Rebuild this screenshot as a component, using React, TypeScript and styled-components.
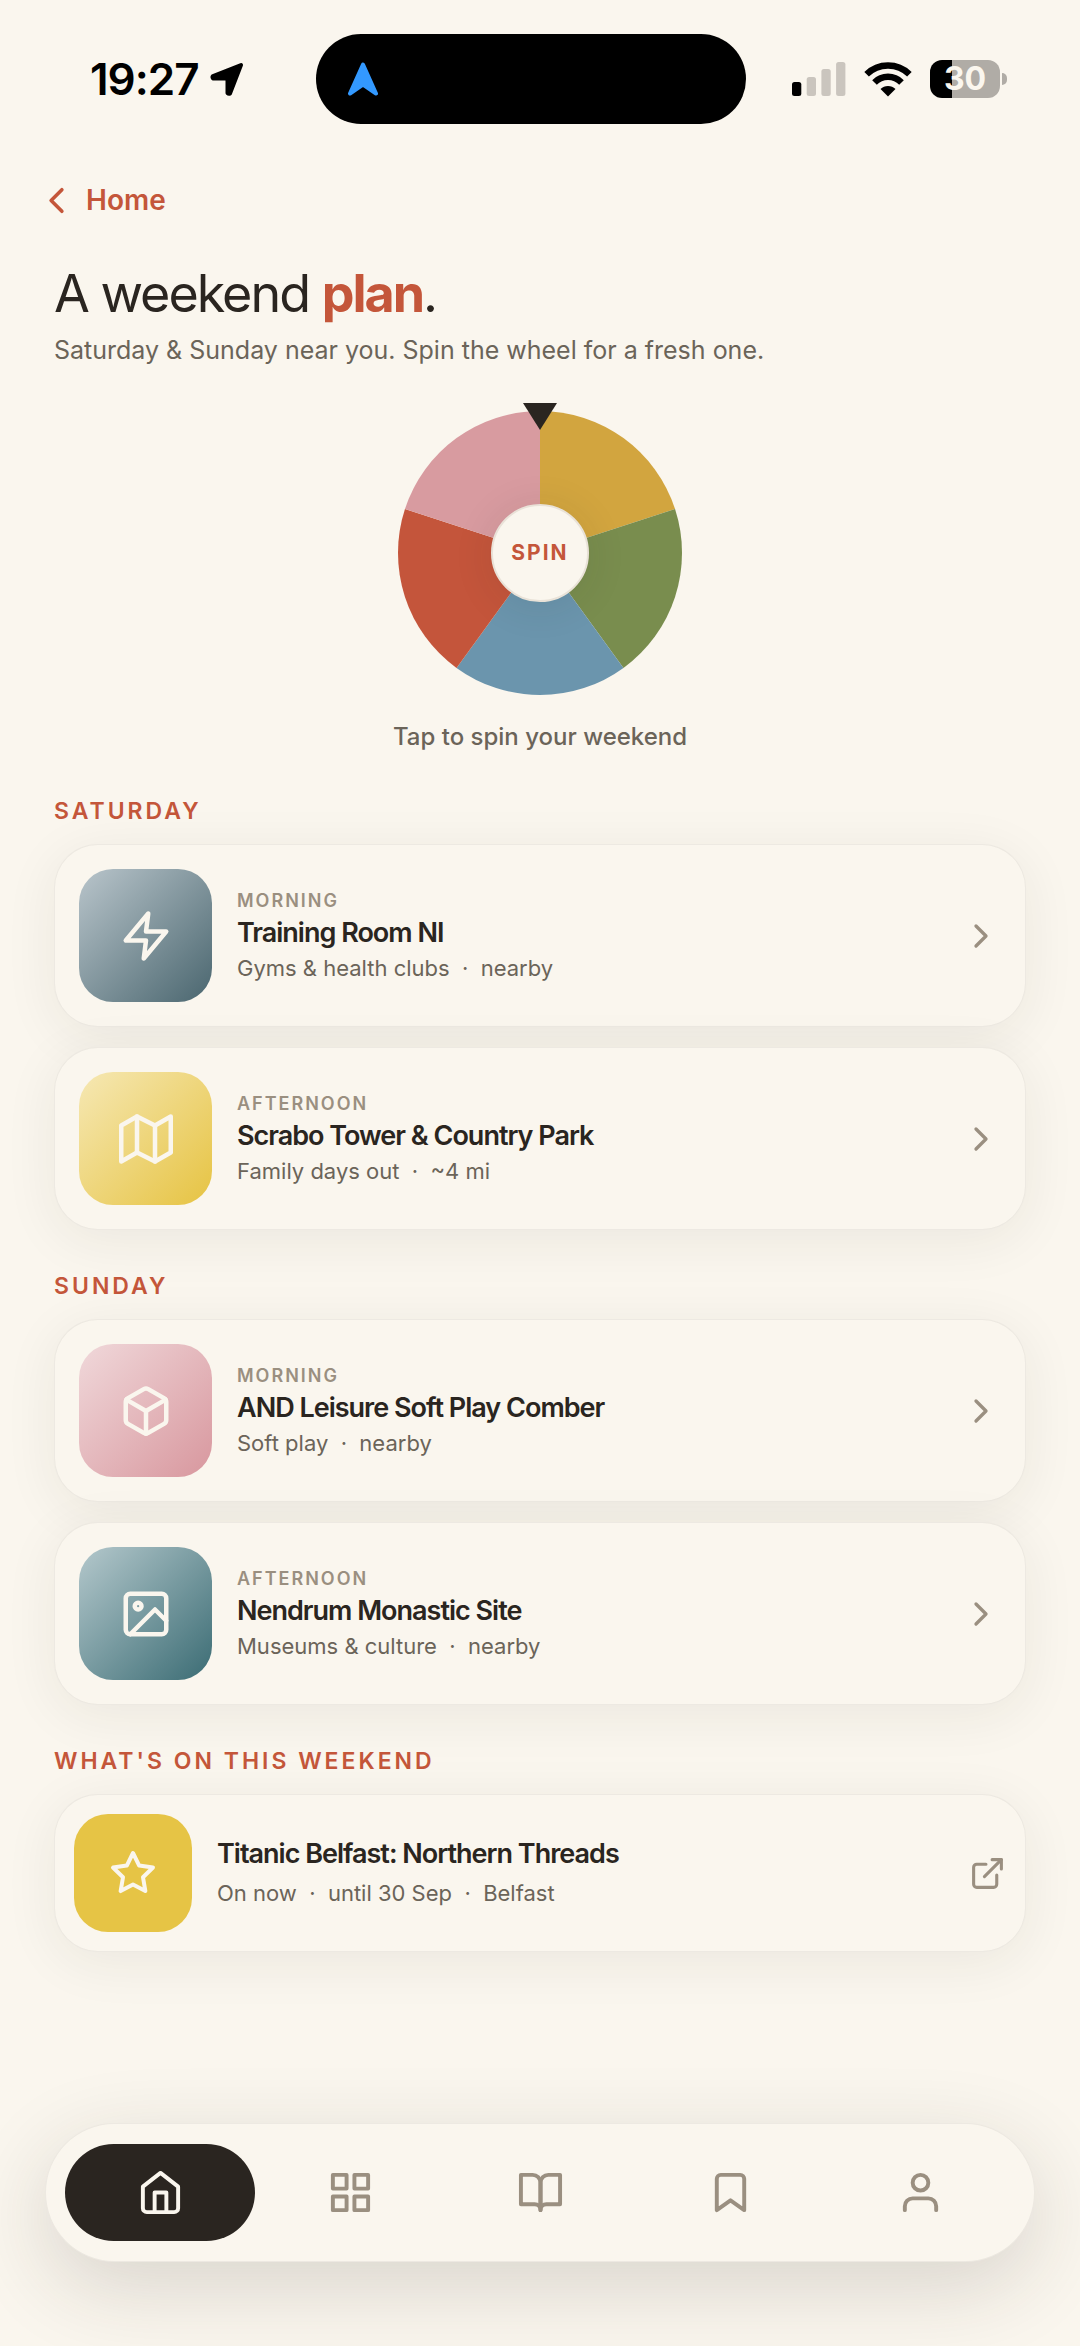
import React from "react";
import styled, { createGlobalStyle } from "styled-components";
import {
  FiBookOpen,
  FiBookmark,
  FiBox,
  FiChevronLeft,
  FiChevronRight,
  FiExternalLink,
  FiGrid,
  FiHome,
  FiImage,
  FiMap,
  FiStar,
  FiUser,
  FiZap,
} from "react-icons/fi";
import type { IconType } from "react-icons";

const color = {
  paper: "#faf6ee",
  ink: "#2a2520",
  body: "#6b6459",
  muted: "#9a8f80",
  brand: "#c4563a",
  line: "rgba(42, 37, 32, 0.06)",
};

const GlobalStyle = createGlobalStyle`
  *, *::before, *::after { box-sizing: border-box; }
  body {
    margin: 0;
    background: ${color.paper};
    color: ${color.ink};
    font-family: Inter, "Liberation Sans", sans-serif;
  }
  a { color: inherit; text-decoration: none; }
  h1, h2, h3, p { margin: 0; }
  svg { display: block; flex: none; }
`;

const Page = styled.div`
  display: flex;
  flex-direction: column;
  min-height: 100vh;
  overflow: hidden;
`;

/* Status bar */

const StatusBar = styled.header`
  display: grid;
  grid-template-columns: 316fr 430px 334fr;
  align-items: center;
  height: 124px;
  padding-top: 34px;
  color: #000;
`;

const StatusLeft = styled.div`
  display: flex;
  align-items: center;
  gap: 11px;
  padding-left: 90px;
`;

const Clock = styled.time`
  font-size: 44px;
  line-height: 48px;
  font-weight: 600;
  letter-spacing: -1px;
`;

const Island = styled.div`
  display: flex;
  align-items: center;
  height: 90px;
  padding: 0 31px;
  border-radius: 45px;
  background: #000;
`;

const StatusRight = styled.div`
  display: flex;
  align-items: center;
  justify-content: flex-end;
  gap: 18px;
  padding-right: 73px;
`;

const BatteryRow = styled.div`
  display: flex;
  align-items: center;
  gap: 2px;
`;

const BatteryBody = styled.div<{ $level: number }>`
  display: grid;
  place-items: center;
  width: 70px;
  height: 38px;
  border-radius: 12px;
  background: linear-gradient(to right, #000 ${(p) => p.$level}%, #b0aca6 ${(p) => p.$level}%);
  color: ${color.paper};
  font-size: 32px;
  line-height: 38px;
  font-weight: 700;
`;

const BatteryCap = styled.div`
  width: 5px;
  height: 12px;
  border-radius: 0 5px 5px 0;
  background: #b0aca6;
`;

/* Header */

const Main = styled.main`
  display: flex;
  flex-direction: column;
  padding: 0 54px;
`;

const BackNav = styled.nav`
  display: flex;
  margin-top: 54px;
  padding-left: 35px;
`;

const BackLink = styled.a`
  display: flex;
  align-items: center;
  gap: 8px;
  color: ${color.brand};
  font-size: 28px;
  line-height: 44px;
  font-weight: 600;
`;

const Title = styled.h1`
  margin-top: 42px;
  font-size: 52px;
  line-height: 60px;
  font-weight: 400;
  letter-spacing: -2px;

  strong {
    color: ${color.brand};
    font-weight: 700;
  }
`;

const Subtitle = styled.p`
  margin-top: 8px;
  color: ${color.body};
  font-size: 25px;
  line-height: 36px;
`;

/* Wheel */

const Spinner = styled.section`
  display: flex;
  flex-direction: column;
  align-items: center;
  margin-top: 43px;
`;

const WheelFrame = styled.div`
  position: relative;
  display: grid;
  place-items: center;

  > * { grid-area: 1 / 1; }
`;

const Pointer = styled.div`
  position: absolute;
  top: -8px;
  left: 50%;
  margin-left: -17px;
  border: solid transparent;
  border-width: 27px 17px 0;
  border-top-color: ${color.ink};
`;

const Hub = styled.button`
  width: 98px;
  height: 98px;
  padding: 0;
  border: 2px solid #e9e2d8;
  border-radius: 50%;
  background: ${color.paper};
  box-shadow: 0 4px 40px rgba(42, 37, 32, 0.1);
  color: ${color.brand};
  font: 700 21px/24px Inter, "Liberation Sans", sans-serif;
  letter-spacing: 2px;
`;

const SpinHint = styled.p`
  margin-top: 24px;
  color: ${color.body};
  font-size: 24px;
  line-height: 36px;
  font-weight: 500;
`;

/* Plan lists */

const Section = styled.section`
  display: flex;
  flex-direction: column;
  margin-top: 40px;
`;

const SectionTitle = styled.h2`
  color: ${color.brand};
  font-size: 23px;
  line-height: 32px;
  font-weight: 600;
  letter-spacing: 3px;
  text-transform: uppercase;
`;

const CardList = styled.div`
  display: flex;
  flex-direction: column;
  gap: 20px;
  margin-top: 17px;
`;

const Card = styled.a<{ $compact?: boolean }>`
  display: flex;
  align-items: center;
  gap: 25px;
  padding: ${(p) => (p.$compact ? "19px" : "24px")};
  border: 1px solid ${color.line};
  border-radius: 44px;
  background: ${color.paper};
  box-shadow: 0 10px 54px rgba(42, 37, 32, 0.07);
`;

const Tile = styled.div<{ $fill: string; $size: number }>`
  display: grid;
  place-items: center;
  flex: none;
  width: ${(p) => p.$size}px;
  height: ${(p) => p.$size}px;
  border-radius: 34px;
  background: ${(p) => p.$fill};
  color: ${color.paper};
`;

const CardText = styled.div`
  flex: 1;
  min-width: 0;
`;

const Slot = styled.p`
  color: ${color.muted};
  font-size: 18px;
  line-height: 28px;
  font-weight: 600;
  letter-spacing: 2px;
  text-transform: uppercase;
`;

const CardTitle = styled.h3`
  font-size: 27px;
  line-height: 36px;
  font-weight: 600;
  letter-spacing: -1px;
`;

const CardMeta = styled.p<{ $spaced?: boolean }>`
  margin-top: ${(p) => (p.$spaced ? "4px" : "0")};
  color: ${color.body};
  font-size: 22px;
  line-height: 34px;
`;

const Trailing = styled.span`
  color: ${color.muted};
`;

/* Tab bar */

const TabBar = styled.nav`
  display: grid;
  grid-template-columns: repeat(5, 1fr);
  margin: auto 45px 84px;
  padding: 20px 19px;
  border: 1px solid ${color.line};
  border-radius: 70px;
  background: ${color.paper};
  box-shadow: 0 24px 84px rgba(42, 37, 32, 0.16);
`;

const Tab = styled.a<{ $active: boolean }>`
  display: grid;
  place-items: center;
  height: 97px;
  border-radius: 49px;
  background: ${(p) => (p.$active ? color.ink : "transparent")};
  color: ${(p) => (p.$active ? color.paper : color.muted)};
`;

const sliceColors = ["#d2a53f", "#798d4e", "#6b95ad", "#c4553b", "#d89ba0"];

function Wheel() {
  const r = 142;
  const step = (2 * Math.PI) / sliceColors.length;
  const point = (i: number) => `${r + r * Math.sin(i * step)} ${r - r * Math.cos(i * step)}`;
  return (
    <svg width={2 * r} height={2 * r} viewBox={`0 0 ${2 * r} ${2 * r}`} aria-hidden="true">
      {sliceColors.map((fill, i) => (
        <path key={fill} fill={fill} d={`M${r} ${r}L${point(i)}A${r} ${r} 0 0 1 ${point(i + 1)}Z`} />
      ))}
    </svg>
  );
}

function LocationArrow() {
  return (
    <svg width="34" height="34" viewBox="0 0 34 34" aria-hidden="true">
      <path
        d="M31 3L20 31.500Q18.500 32 17.500 31V17.500L16 16.500H3Q2 15 3 14Z"
        fill="currentColor"
        stroke="currentColor"
        strokeWidth="4"
        strokeLinejoin="round"
      />
    </svg>
  );
}

function NavigationArrow() {
  return (
    <svg width="32" height="34" viewBox="0 0 32 34" aria-hidden="true">
      <path d="M16 2.500L29 31.500L16 22.500L3 31.500Z" fill="#3399ff" stroke="#3399ff" strokeWidth="4" strokeLinejoin="round" />
    </svg>
  );
}

function SignalBars() {
  const heights = [14, 19, 27, 34];
  return (
    <svg width="54" height="34" viewBox="0 0 54 34" role="img" aria-label="Signal">
      {heights.map((h, i) => (
        <rect key={h} x={i * 14.7} y={34 - h} width="9.300" height={h} rx="2.500" fill={i === 0 ? "#000" : "#cac5be"} />
      ))}
    </svg>
  );
}

function Wifi() {
  return (
    <svg width="48" height="36" viewBox="0 0 48 36" role="img" aria-label="Wi-Fi">
      <g fill="none" stroke="#000" strokeWidth="6.500">
        <path d="M2.600 13.200A30.500 30.500 0 0 1 45.400 13.200" />
        <path d="M10.500 21.500A19 19 0 0 1 37.500 21.500" />
      </g>
      <path d="M24 35.500L16.500 28A10.600 10.600 0 0 1 31.500 28Z" fill="#000" />
    </svg>
  );
}

type Plan = { slot: string; name: string; meta: string; icon: IconType; fill: string };

const days: { day: string; plans: Plan[] }[] = [
  {
    day: "Saturday",
    plans: [
      {
        slot: "Morning",
        name: "Training Room NI",
        meta: "Gyms & health clubs \u00a0·\u00a0 nearby",
        icon: FiZap,
        fill: "linear-gradient(135deg, #b9c5cb, #4a666f)",
      },
      {
        slot: "Afternoon",
        name: "Scrabo Tower & Country Park",
        meta: "Family days out \u00a0·\u00a0 ~4 mi",
        icon: FiMap,
        fill: "linear-gradient(135deg, #f6e8b4, #e6c342)",
      },
    ],
  },
  {
    day: "Sunday",
    plans: [
      {
        slot: "Morning",
        name: "AND Leisure Soft Play Comber",
        meta: "Soft play \u00a0·\u00a0 nearby",
        icon: FiBox,
        fill: "linear-gradient(135deg, #f0d8da, #d8979e)",
      },
      {
        slot: "Afternoon",
        name: "Nendrum Monastic Site",
        meta: "Museums & culture \u00a0·\u00a0 nearby",
        icon: FiImage,
        fill: "linear-gradient(135deg, #b4c8cc, #3b6c74)",
      },
    ],
  },
];

const tabs: { label: string; icon: IconType }[] = [
  { label: "Home", icon: FiHome },
  { label: "Browse", icon: FiGrid },
  { label: "Guides", icon: FiBookOpen },
  { label: "Saved", icon: FiBookmark },
  { label: "Profile", icon: FiUser },
];

export default function App() {
  return (
    <>
      <GlobalStyle />
      <Page>
        <StatusBar>
          <StatusLeft>
            <Clock>19:27</Clock>
            <LocationArrow />
          </StatusLeft>
          <Island>
            <NavigationArrow />
          </Island>
          <StatusRight>
            <SignalBars />
            <Wifi />
            <BatteryRow>
              <BatteryBody $level={31}>30</BatteryBody>
              <BatteryCap />
            </BatteryRow>
          </StatusRight>
        </StatusBar>

        <BackNav>
          <BackLink href="#home">
            <FiChevronLeft size={43} />
            Home
          </BackLink>
        </BackNav>

        <Main>
          <Title>
            A weekend <strong>plan</strong>.
          </Title>
          <Subtitle>Saturday &amp; Sunday near you. Spin the wheel for a fresh one.</Subtitle>

          <Spinner>
            <WheelFrame>
              <Wheel />
              <Hub type="button">SPIN</Hub>
              <Pointer />
            </WheelFrame>
            <SpinHint>Tap to spin your weekend</SpinHint>
          </Spinner>

          {days.map(({ day, plans }) => (
            <Section key={day}>
              <SectionTitle>{day}</SectionTitle>
              <CardList>
                {plans.map(({ slot, name, meta, icon: Icon, fill }) => (
                  <Card key={name} href="#place">
                    <Tile $fill={fill} $size={133}>
                      <Icon size={54} />
                    </Tile>
                    <CardText>
                      <Slot>{slot}</Slot>
                      <CardTitle>{name}</CardTitle>
                      <CardMeta>{meta}</CardMeta>
                    </CardText>
                    <Trailing>
                      <FiChevronRight size={40} />
                    </Trailing>
                  </Card>
                ))}
              </CardList>
            </Section>
          ))}

          <Section>
            <SectionTitle>What's on this weekend</SectionTitle>
            <CardList>
              <Card href="#event" $compact>
                <Tile $fill="#e6c445" $size={118}>
                  <FiStar size={48} />
                </Tile>
                <CardText>
                  <CardTitle>Titanic Belfast: Northern Threads</CardTitle>
                  <CardMeta $spaced>On now {"\u00a0·\u00a0"} until 30 Sep {"\u00a0·\u00a0"} Belfast</CardMeta>
                </CardText>
                <Trailing>
                  <FiExternalLink size={37} />
                </Trailing>
              </Card>
            </CardList>
          </Section>
        </Main>

        <TabBar aria-label="Main">
          {tabs.map(({ label, icon: Icon }, i) => (
            <Tab key={label} href={`#${label.toLowerCase()}`} aria-label={label} $active={i === 0}>
              <Icon size={47} />
            </Tab>
          ))}
        </TabBar>
      </Page>
    </>
  );
}
